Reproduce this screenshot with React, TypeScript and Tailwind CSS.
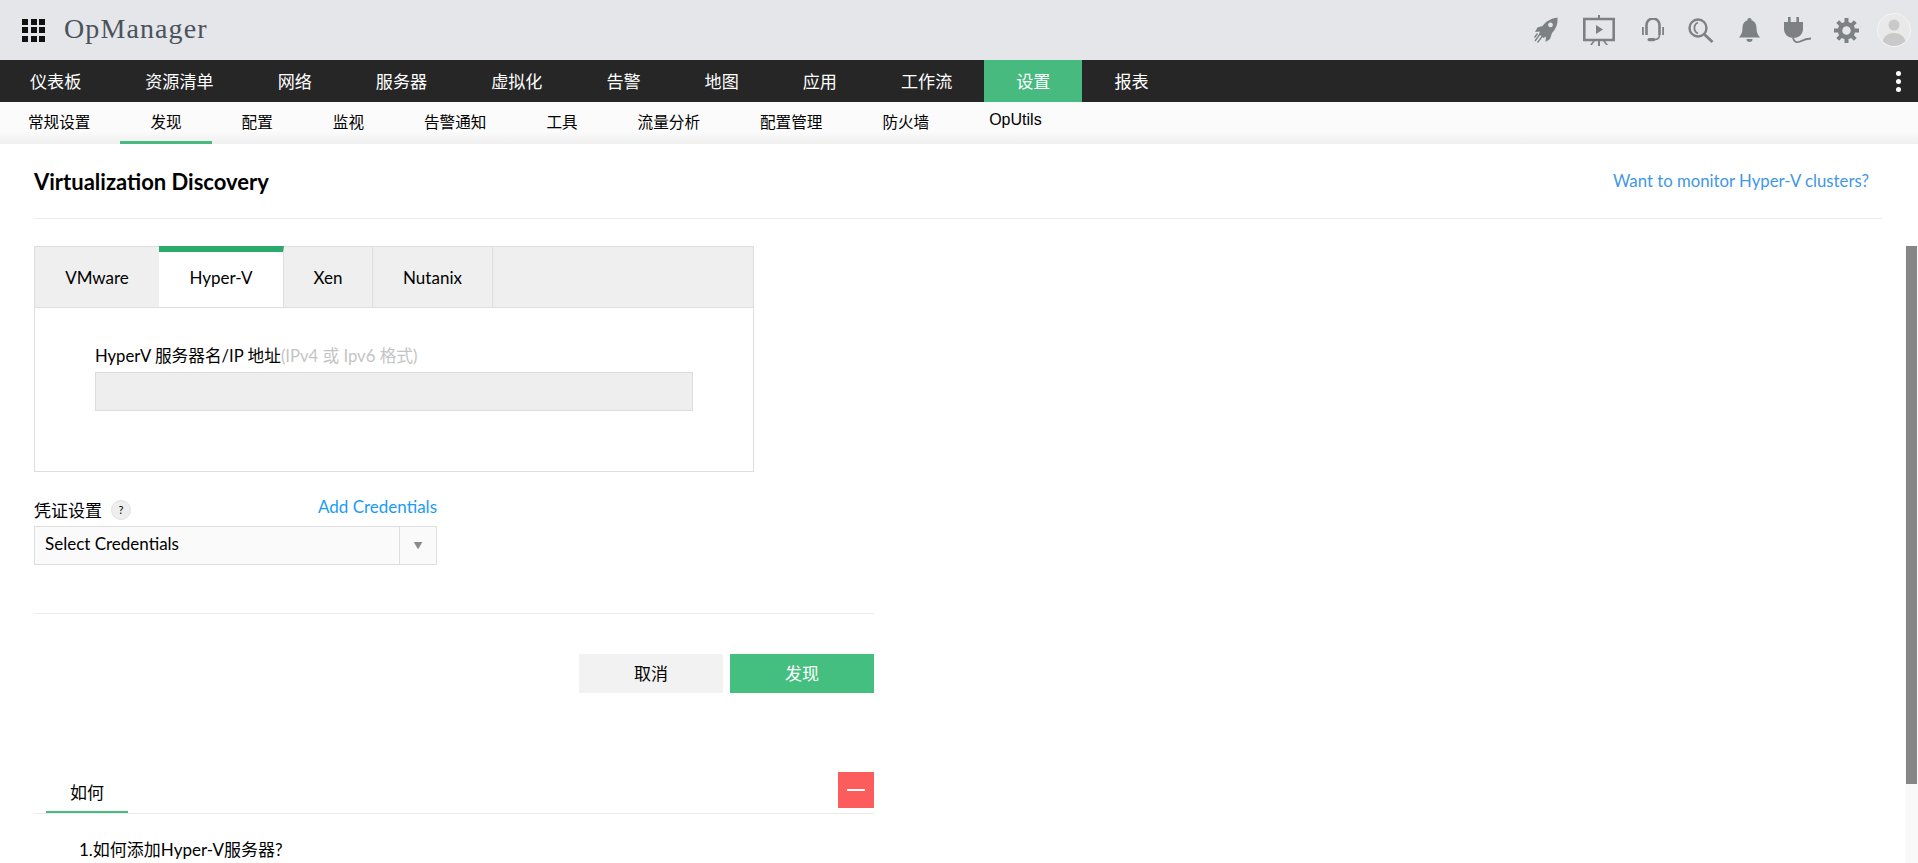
import React from 'react'

const mainNav = ['仪表板', '资源清单', '网络', '服务器', '虚拟化', '告警', '地图', '应用', '工作流', '设置', '报表']
const subNav = ['常规设置', '发现', '配置', '监视', '告警通知', '工具', '流量分析', '配置管理', '防火墙']
const tabs = ['VMware', 'Hyper-V', 'Xen', 'Nutanix']

function HeaderIcons() {
  return (
    <div className="flex items-center text-[#7d8184]">
      <svg width="24" height="27" viewBox="0 0 24 27" fill="currentColor">
        <path d="M23.5 0.5C17 1.5 11.5 4.5 8.5 9L3.5 10.5L1 15L6 14.5L5 17L9.5 21L12 19.5L11.5 25L16 22L18 16C22 12 24 7 23.5 0.5ZM16.5 5.5a2.4 2.4 0 1 1-.01 0Z" fillRule="evenodd" />
        <path d="M1 24l5-7M3.5 25.5l5-6.5M0.5 20.5l3-4" stroke="currentColor" strokeWidth="1.3" fill="none" />
      </svg>
      <svg width="32" height="31" viewBox="0 0 32 31" className="ml-[25px]" fill="currentColor">
        <path d="M1.3 4h29.4v21H1.3z" fill="none" stroke="currentColor" strokeWidth="2.6" />
        <path d="M15 0h2v4h-2zM15 25h2v6h-2zM7 30l3-4h2l-3 4zM25 30l-3-4h-2l3 4z" />
        <path d="M13 10l7 4.5-7 4.5z" />
      </svg>
      <svg width="22" height="25" viewBox="0 0 22 25" className="ml-[27px]" fill="currentColor">
        <path d="M4.5 17V7a6.5 6.5 0 0 1 13 0V17" fill="none" stroke="currentColor" strokeWidth="2.6" />
        <path d="M0 9h1.8v8H0zM20.2 9H22v8h-1.8z" />
        <path d="M17.5 17c0 3-2 4.5-5 4.5" fill="none" stroke="currentColor" strokeWidth="1.6" />
        <rect x="5.5" y="20" width="8" height="3.2" rx="1.6" />
      </svg>
      <svg width="26" height="25" viewBox="0 0 26 25" className="ml-[24px]" fill="none" stroke="currentColor">
        <circle cx="10" cy="10" r="8.5" strokeWidth="2.4" />
        <path d="M10 4.5a6 6 0 0 0 0 11" strokeWidth="1.8" />
        <path d="M16.5 16.5l8 7.5" strokeWidth="2.8" />
      </svg>
      <svg width="21" height="25" viewBox="0 0 21 25" className="ml-[25px]" fill="currentColor">
        <path d="M10.5 0a2 2 0 0 1 2 2.3C16 3.3 17.5 6.5 17.5 10c0 4 1 6.5 3.5 9.5H0c2.5-3 3.5-5.5 3.5-9.5 0-3.5 1.5-6.7 5-7.7a2 2 0 0 1 2-2.3Z" />
        <path d="M7.5 21h6a3 3 0 0 1-6 0Z" />
      </svg>
      <svg width="27" height="27" viewBox="0 0 27 27" className="ml-[24px]" fill="currentColor">
        <path d="M4 0h2.6v6H4zM12.4 0H15v6h-2.6zM0 5h19v7c0 5-4 9-9.5 9S0 17 0 12z" />
        <path d="M9 21c1 4 4 5 7 3.5s6-3 11-3" fill="none" stroke="currentColor" strokeWidth="1.8" />
      </svg>
      <svg width="25" height="25" viewBox="0 0 25 25" className="ml-[23px]" fill="none" stroke="currentColor">
        <circle cx="12.5" cy="12.5" r="6.5" strokeWidth="4.5" />
        <path d="M12.5 0v5M12.5 20v5M0 12.5h5M20 12.5h5M3.7 3.7l3.5 3.5M17.8 17.8l3.5 3.5M3.7 21.3l3.5-3.5M17.8 7.2l3.5-3.5" strokeWidth="4" />
      </svg>
      <div className="ml-[18px] w-[34px] h-[34px] rounded-full border border-[#f5f5f5] bg-[#e9e9e9] overflow-hidden">
        <svg width="32" height="32" viewBox="0 0 32 32" fill="#c9c9c9">
          <circle cx="16" cy="11" r="5.5" />
          <path d="M4 32c0-9 5-13 12-13s12 4 12 13z" />
        </svg>
      </div>
    </div>
  )
}

export default function App() {
  return (
    <div className='h-screen w-full flex flex-col overflow-hidden bg-white text-black font-["Lato","Noto_Sans_CJK_SC",sans-serif]'>
      <div className="h-[60px] shrink-0 bg-[#e4e6e9] flex items-center justify-between pl-[22px] pr-[7px]">
        <div className="flex items-center">
          <div className="grid grid-cols-3 gap-[2.5px] w-[23px]">
            {Array.from({ length: 9 }).map((_, i) => (
              <div key={i} className="h-[6px] bg-[#111]" />
            ))}
          </div>
          <span className='ml-[19px] -mt-[2px] text-[28px] text-[#4a525c] tracking-[1.1px] font-["Liberation_Serif",serif]'>OpManager</span>
        </div>
        <HeaderIcons />
      </div>

      <div className="h-[42px] shrink-0 bg-[#262626] flex items-stretch justify-between pr-[17px]">
        <div className="flex -ml-[2px]">
          {mainNav.map((item) => (
            <div
              key={item}
              className={`px-8 flex items-center text-[17.1px] text-white font-["Noto_Sans_CJK_SC",sans-serif] ${item === '设置' ? 'bg-[#47bb7f]' : ''}`}
            >
              {item}
            </div>
          ))}
        </div>
        <div className="flex flex-col justify-center gap-[3px]">
          <div className="w-[5px] h-[5px] rounded-full bg-white" />
          <div className="w-[5px] h-[5px] rounded-full bg-white" />
          <div className="w-[5px] h-[5px] rounded-full bg-white" />
        </div>
      </div>

      <div className="h-[42px] shrink-0 bg-gradient-to-b from-[#fbfbfb] from-70% to-[#efefef] flex">
        <div className="flex -ml-[2px]">
          {subNav.map((item) => (
            <div
              key={item}
              className={`px-[30px] flex items-center text-[15.6px] text-black border-b-[3px] font-["Noto_Sans_CJK_SC",sans-serif] ${item === '发现' ? 'border-[#47bb7f]' : 'border-transparent'}`}
            >
              {item}
            </div>
          ))}
          <div className='px-[30px] pb-[6px] flex items-center text-[16px] text-black font-["Liberation_Sans",sans-serif]'>OpUtils</div>
        </div>
      </div>

      <div className="flex-1 flex min-h-0">
        <div className="flex-1 min-w-0 pl-[34px] pr-[23px] overflow-hidden">
          <div className="h-[75px] flex items-center justify-between border-b border-[#ececec] pr-[13px]">
            <h1 className="text-[22px] font-bold text-black">Virtualization Discovery</h1>
            <a className="text-[16.75px] text-[#3f97e8]">Want to monitor Hyper-V clusters?</a>
          </div>

          <div className="mt-[27px] w-[720px] h-[226px] border border-[#dedede]">
            <div className="flex h-[61px] bg-[#efefef] border-b border-[#dedede]">
              {tabs.map((tab, i) => (
                <div
                  key={tab}
                  className={`flex items-center justify-center text-[17px] border-r border-[#dedede] ${
                    tab === 'Hyper-V'
                      ? 'w-[125px] -ml-px h-[61px] bg-white border-t-[6px] border-t-[#2bab6b] -mt-px pb-[3px]'
                      : i === 0
                        ? 'w-[125px] pt-[1px]'
                        : i === 2
                          ? 'w-[89px] pt-[1px]'
                          : 'w-[120px] pt-[1px]'
                  }`}
                >
                  {tab}
                </div>
              ))}
            </div>
            <div className="pl-[60px] pt-[37px]">
              <div className="text-[16.67px] leading-[22px]">
                HyperV 服务器名/IP 地址<span className="text-[#c4c4c4]">(IPv4 或 Ipv6 格式)</span>
              </div>
              <div className="mt-[5px] w-[598px] h-[39px] bg-[#eeeeee] border border-[#dcdcdc]" />
            </div>
          </div>

          <div className="mt-[26px] w-[403px]">
            <div className="flex items-end justify-between h-[28px]">
              <div className="flex items-center gap-[9px] text-[17px] mb-[3px]">
                <span>凭证设置</span>
                <span className="w-[20px] h-[20px] rounded-full bg-[#eeeeee] border border-[#e2e2e2] flex items-center justify-center text-[11px]">?</span>
              </div>
              <a className="text-[17px] text-[#1a9cf5] mb-[7px]">Add Credentials</a>
            </div>
            <div className="flex h-[39px] bg-[#fafafa] border border-[#dedede] text-[17px]">
              <div className="flex-1 pl-[10px] flex items-center pb-[3px]">Select Credentials</div>
              <div className="w-[37px] border-l border-[#dedede] flex items-center justify-center text-[#8a8a8a] text-[9px]">▼</div>
            </div>
          </div>

          <div className="mt-[48px] w-[840px] border-t border-[#ececec] pt-[40px]">
            <div className="flex justify-end gap-[7px] text-[17px]">
              <button className="w-[144px] h-[39px] bg-[#f2f2f2] text-black">取消</button>
              <button className="w-[144px] h-[39px] bg-[#45bf80] text-white">发现</button>
            </div>
          </div>

          <div className="mt-[79px] w-[840px]">
            <div className="h-[42px] border-b border-[#ececec] flex justify-between items-start">
              <div className="ml-[12px] w-[82px] h-[41px] border-b-[2px] border-[#47bb7f] flex items-end justify-center text-[17px] pb-[6px]">如何</div>
              <div className="w-[36px] h-[36px] bg-[#fd5c5c] flex items-center justify-center">
                <div className="w-[18px] h-[2.5px] bg-white" />
              </div>
            </div>
            <ol className="mt-[24px] pl-[45px] text-[17px] leading-[24px]">
              <li>1.如何添加Hyper-V服务器?</li>
            </ol>
          </div>
        </div>

        <div className="w-[13px] shrink-0 bg-white pt-[102px]">
          <div className="h-full bg-[#f9f9f9] px-px">
            <div className="h-[538px] bg-[#868686]" />
          </div>
        </div>
      </div>
    </div>
  )
}
